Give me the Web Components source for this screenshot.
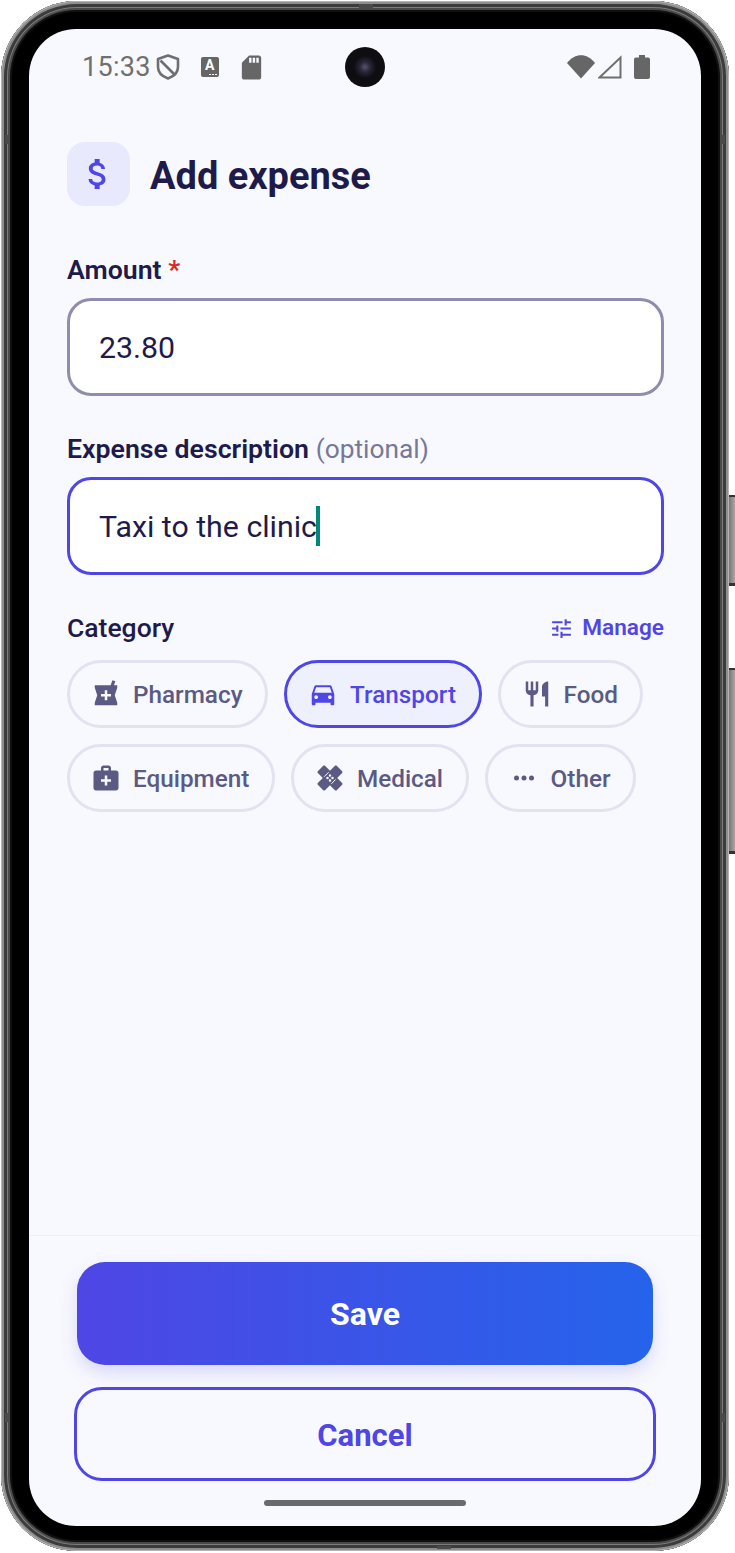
<!DOCTYPE html>
<html lang="en"><head><meta charset="utf-8"><title>Add expense</title>
<style>
html,body{margin:0;padding:0;background:#fff}
body{width:735px;height:1553px;overflow:hidden;font-family:Roboto,"Liberation Sans",sans-serif;color:#1e1b4b}
</style></head><body>
<x-phone>
  <x-status-bar slot="status"></x-status-bar>
  <x-page-head title-text="Add expense"></x-page-head>
  <x-field label="Amount" required value="23.80"></x-field>
  <x-field label="Expense description" hint="(optional)" value="Taxi to the clinic" focused></x-field>
  <x-category-head></x-category-head>
  <x-chip-group>
    <x-chip icon="pharmacy">Pharmacy</x-chip>
    <x-chip icon="car" selected>Transport</x-chip>
    <x-chip icon="food">Food</x-chip>
    <x-chip icon="kit">Equipment</x-chip>
    <x-chip icon="healing">Medical</x-chip>
    <x-chip icon="more">Other</x-chip>
  </x-chip-group>
  <x-footer slot="footer"></x-footer>
</x-phone>
<script>
const ICONS={
 dollar:'<path d="M11.8 10.9c-2.27-.59-3-1.2-3-2.15 0-1.09 1.01-1.85 2.7-1.85 1.78 0 2.44.85 2.5 2.1h2.21c-.07-1.72-1.12-3.3-3.21-3.81V3h-3v2.16c-1.94.42-3.5 1.68-3.5 3.61 0 2.31 1.91 3.46 4.7 4.13 2.5.6 3 1.48 3 2.41 0 .69-.49 1.79-2.7 1.79-2.06 0-2.87-.92-2.98-2.1h-2.2c.12 2.19 1.76 3.42 3.68 3.83V21h3v-2.15c1.95-.37 3.5-1.5 3.5-3.55 0-2.84-2.43-3.81-4.7-4.4z"/>',
 car:'<path d="M18.92 6.01C18.72 5.42 18.16 5 17.5 5h-11c-.66 0-1.21.42-1.42 1.01L3 12v8c0 .55.45 1 1 1h1c.55 0 1-.45 1-1v-1h12v1c0 .55.45 1 1 1h1c.55 0 1-.45 1-1v-8l-2.08-5.99zM6.5 16c-.83 0-1.5-.67-1.5-1.5S5.67 13 6.5 13s1.5.67 1.5 1.5S7.33 16 6.5 16zm11 0c-.83 0-1.5-.67-1.5-1.5s.67-1.5 1.5-1.5 1.5.67 1.5 1.5-.67 1.5-1.5 1.5zM5 11l1.5-4.5h11L19 11H5z"/>',
 food:'<path d="M11 9H9V2H7v7H5V2H3v7c0 2.12 1.66 3.84 3.75 3.97V22h2.5v-9.03C11.34 12.84 13 11.12 13 9V2h-2v7zm5-3v8h2.5v8H21V2c-2.76 0-5 2.24-5 4z"/>',
 kit:'<path d="M20 6h-4V4c0-1.1-.9-2-2-2h-4c-1.1 0-2 .9-2 2v2H4c-1.1 0-2 .9-2 2v12c0 1.1.9 2 2 2h16c1.1 0 2-.9 2-2V8c0-1.1-.9-2-2-2zM10 4h4v2h-4V4zm6 11h-3v3h-2v-3H8v-2h3v-3h2v3h3v2z"/>',
 pharmacy:'<path d="M21 5h-2.64l1.14-3.14L17.15 1l-1.46 4H3v2l2 6-2 6v2h18v-2l-2-6 2-6V5zm-5 9h-3v3h-2v-3H8v-2h3V9h2v3h3v2z"/>',
 healing:'<path fill-rule="evenodd" d="M17.73 12.02l3.98-3.98c.39-.39.39-1.02 0-1.41l-4.34-4.34c-.39-.39-1.02-.39-1.41 0l-3.98 3.98L8 2.29c-.39-.39-1.03-.39-1.42 0L2.25 6.63c-.39.39-.39 1.02 0 1.41l3.98 3.98L2.25 16c-.39.39-.39 1.02 0 1.41l4.34 4.34c.39.39 1.02.39 1.41 0l3.98-3.98 3.98 3.98c.2.2.45.29.71.29s.51-.1.71-.29l4.34-4.34c.39-.39.39-1.02 0-1.41l-3.98-3.98zM12 9a1 1 0 1 1 0 2 1 1 0 0 1 0-2zm-2 4a1 1 0 1 1 0-2 1 1 0 0 1 0 2zm2 2a1 1 0 1 1 0-2 1 1 0 0 1 0 2zm2-4a1 1 0 1 1 0 2 1 1 0 0 1 0-2z"/><path fill="none" stroke="#f8f9fe" stroke-width=".8" d="M7.3 11l3.6-3.6M13 16.7l3.6-3.6"/>',
 more:'<circle cx="6" cy="12" r="2"/><circle cx="12" cy="12" r="2"/><circle cx="18" cy="12" r="2"/>',
 tune:'<path d="M3 17v2h6v-2H3zM3 5v2h10V5H3zm10 16v-2h8v-2h-8v-2h-2v6h2zM7 9v2H3v2h4v2h2V9H7zm14 4v-2H11v2h10zm-6-4h2V7h4V5h-4V3h-2v6z"/>'
};
const svg=(n,s)=>`<svg width="${s}" height="${s}" viewBox="0 0 24 24" fill="currentColor" aria-hidden="true">${ICONS[n]}</svg>`;
function def(name,html,setup){
  customElements.define(name,class extends HTMLElement{
    constructor(){super();this.attachShadow({mode:'open'});}
    connectedCallback(){this.shadowRoot.innerHTML=typeof html==='function'?html(this):html;if(setup)setup(this);}
  });
}
def('x-phone',`<style>
:host{display:block;position:relative;width:728px;height:1550px;margin:1px 0 0 1px}
.body{box-sizing:border-box;width:100%;height:100%;padding:28px 28px 25px;border-radius:76px;background:#000;
 box-shadow:inset 0 0 0 1px #b5b5b5,inset 0 0 0 3px #8d8d8d,inset 0 0 0 6px #3c3c3c,inset 0 0 0 7px #7c7c7c,inset 0 0 0 9px #4a4a4a,inset 0 0 0 11px #101010}
.screen{height:100%;border-radius:47px;background:#f8f9fe;overflow:hidden;display:flex;flex-direction:column}
main{flex:1;box-sizing:border-box;padding:37px 37px 0 38px;display:flex;flex-direction:column;min-height:0}
.btn{position:absolute;left:728px;width:6px;background:linear-gradient(90deg,#777,#a8a8a8);border-top:2px solid #333;border-bottom:3px solid #333;box-sizing:border-box}
.b1{top:494px;height:91px}.b2{top:667px;height:186px}
.mark{position:absolute;background:#4a4a4a}
</style>
<div class="body"><div class="screen"><slot name="status"></slot><main><slot></slot></main><slot name="footer"></slot></div></div>
<div class="btn b1"></div><div class="btn b2"></div>
<i class="mark" style="left:4px;top:134px;width:4px;height:9px"></i>
<i class="mark" style="left:4px;top:1412px;width:4px;height:9px"></i>
<i class="mark" style="left:720px;top:134px;width:4px;height:9px"></i>
<i class="mark" style="left:720px;top:1412px;width:4px;height:9px"></i>
<i class="mark" style="left:358px;top:3px;width:14px;height:4px"></i>
<i class="mark" style="left:436px;top:1545px;width:14px;height:3px"></i>`);
def('x-status-bar',`<style>
:host{display:block;height:76px;position:relative;color:#6f6f6f}
.row{display:flex;align-items:center;height:76px;box-sizing:border-box;padding:0 0 0 53px}
.time{font:400 27px/1 Roboto,sans-serif;letter-spacing:.3px;color:#707070;margin-right:5px}
.a{box-sizing:border-box;width:18px;height:20px;margin-left:21px;background:#666;border-radius:2px;color:#fff;font:700 14px/16px Roboto,sans-serif;text-align:center;position:relative}
.a i{position:absolute;right:2px;bottom:2px;width:1.5px;height:1.5px;background:#fff;box-shadow:-3px 0 #fff,-6px 0 #fff}
.sd{margin-left:18px;display:block;flex:none}
.right{margin-left:auto;display:flex;align-items:center;padding-right:51px;gap:3px}
.cam{position:absolute;left:316px;top:18px;width:40px;height:40px;border-radius:50%;background:radial-gradient(circle at 50% 50%,#5b5270 0,#2a2738 18%,#0d0d12 40%,#111 100%)}
</style><div class="row"><span class="time">15:33</span>
<svg width="24" height="26" viewBox="0 0 24 26" fill="none" stroke="#6f6f6f" stroke-width="2.6" stroke-linejoin="round"><path d="M12 1.5 L22 5 V13 C22 18.5 17.5 22.5 12 24.5 C6.5 22.5 2 18.5 2 13 V5 Z"/><path d="M4.5 6.5 L18 20"/></svg>
<span class="a">A<i></i></span>
<svg class="sd" width="29" height="29" viewBox="0 0 24 24" fill="#666"><path d="M18 2h-8L4.02 8 4 20c0 1.1.9 2 2 2h12c1.1 0 2-.9 2-2V4c0-1.1-.9-2-2-2zm-6 6h-2V4h2v4zm3 0h-2V4h2v4zm3 0h-2V4h2v4z"/></svg>
<div class="right">
<svg width="28" height="24" viewBox="0 0 28 24" fill="#666"><path d="M14 23.5 L0 8 C8 -2.5 20 -2.5 28 8 Z"/></svg>
<svg width="24" height="24" viewBox="0 0 24 24" fill="none" stroke="#6f6f6f" stroke-width="2"><path d="M1.5 22.5 L22.5 2.5 V22.5 Z"/></svg>
<svg style="margin-left:9px" width="16" height="24" viewBox="0 0 16 24" fill="#666"><path d="M5 0h6v2.5h3a2 2 0 0 1 2 2V22a2 2 0 0 1-2 2H2a2 2 0 0 1-2-2V4.5a2 2 0 0 1 2-2h3z"/></svg>
</div></div><div class="cam"></div>`);
def('x-page-head',e=>`<style>
:host{display:block;margin-bottom:49px}
.r{display:flex;align-items:center;gap:20px}
.i{box-sizing:border-box;width:63px;height:64px;padding-right:2px;border-radius:18px;background:#e8e9fc;color:#4f46e5;display:flex;align-items:center;justify-content:center}
h1{margin:0;padding-top:3px;font:700 38px/44px Roboto,sans-serif;color:#1e1b4b}
</style><div class="r"><div class="i">${svg('dollar',40)}</div><h1>${e.getAttribute('title-text')}</h1></div>`);
def('x-field',e=>`<style>
:host{display:block;margin-bottom:38px}
.l{font:600 26.7px/30px Roboto,sans-serif;color:#1e1b4b;margin-bottom:13px;white-space:nowrap}
.o{font-weight:400;font-size:26.3px;color:#77779a}.s{color:#dc2626}
.b{box-sizing:border-box;height:98px;border:3px solid ${e.hasAttribute('focused')?'#4f46e5':'#8f8dab'};border-radius:24px;background:#fff;display:flex;align-items:center;padding:2px 29px 0;font:400 30.3px/40px Roboto,sans-serif;color:#1e1b4b}
.c{display:inline-block;width:4px;height:40px;background:#00897b;margin:-2px 0 0 -1px;flex:none}
</style><div class="l">${e.getAttribute('label')}${e.hasAttribute('required')?' <span class="s">*</span>':''}${e.hasAttribute('hint')?` <span class="o">${e.getAttribute('hint')}</span>`:''}</div>
<div class="b"><span>${e.getAttribute('value')}</span>${e.hasAttribute('focused')?'<span class="c"></span>':''}</div>`);
def('x-category-head',`<style>
:host{display:flex;justify-content:space-between;align-items:center;height:30px;margin-bottom:17px}
.t{font:500 26.5px/30px Roboto,sans-serif;color:#1e1b4b}
.m{display:flex;align-items:center;gap:8px;font:600 22.6px/30px Roboto,sans-serif;color:#4f46e5}
</style><span class="t">Category</span><span class="m">${svg('tune',25)}Manage</span>`);
def('x-chip-group',`<style>:host{display:flex;flex-wrap:wrap;gap:16px}</style><slot></slot>`);
def('x-chip',e=>{const s=e.hasAttribute('selected');return `<style>
:host{display:block}
.c{box-sizing:border-box;height:68px;border-radius:34px;border:3px solid ${s?'#4f46e5':'#e2e2f0'};background:${s?'#eef0fe':'transparent'};color:${s?'#4f46e5':'#5a5a85'};display:flex;align-items:center;gap:12px;padding:0 22.5px 0 21px;font:500 24.3px/30px Roboto,sans-serif;white-space:nowrap}
svg{flex:none}
span{padding-top:2px}
</style><div class="c">${svg(e.getAttribute('icon'),30)}<span><slot></slot></span></div>`});
def('x-footer',`<style>
:host{display:block;border-top:1px solid #eef0f6;padding:26px 45px 20px}
.s{margin:0 3px;height:103px;border-radius:28px;background:linear-gradient(90deg,#4f46e5,#2563eb);color:#fff;font:700 32px/105px Roboto,sans-serif;text-align:center;box-shadow:0 8px 18px rgba(79,70,229,.18)}
.x{margin-top:22px;box-sizing:border-box;height:94px;border-radius:28px;border:3px solid #4f46e5;color:#4f46e5;font:700 31px/91px Roboto,sans-serif;text-align:center}
.h{margin:19px auto 0;width:202px;height:6px;border-radius:3px;background:#6a6a6e}
</style><div class="s">Save</div><div class="x">Cancel</div><div class="h"></div>`);
</script>
</body></html>
